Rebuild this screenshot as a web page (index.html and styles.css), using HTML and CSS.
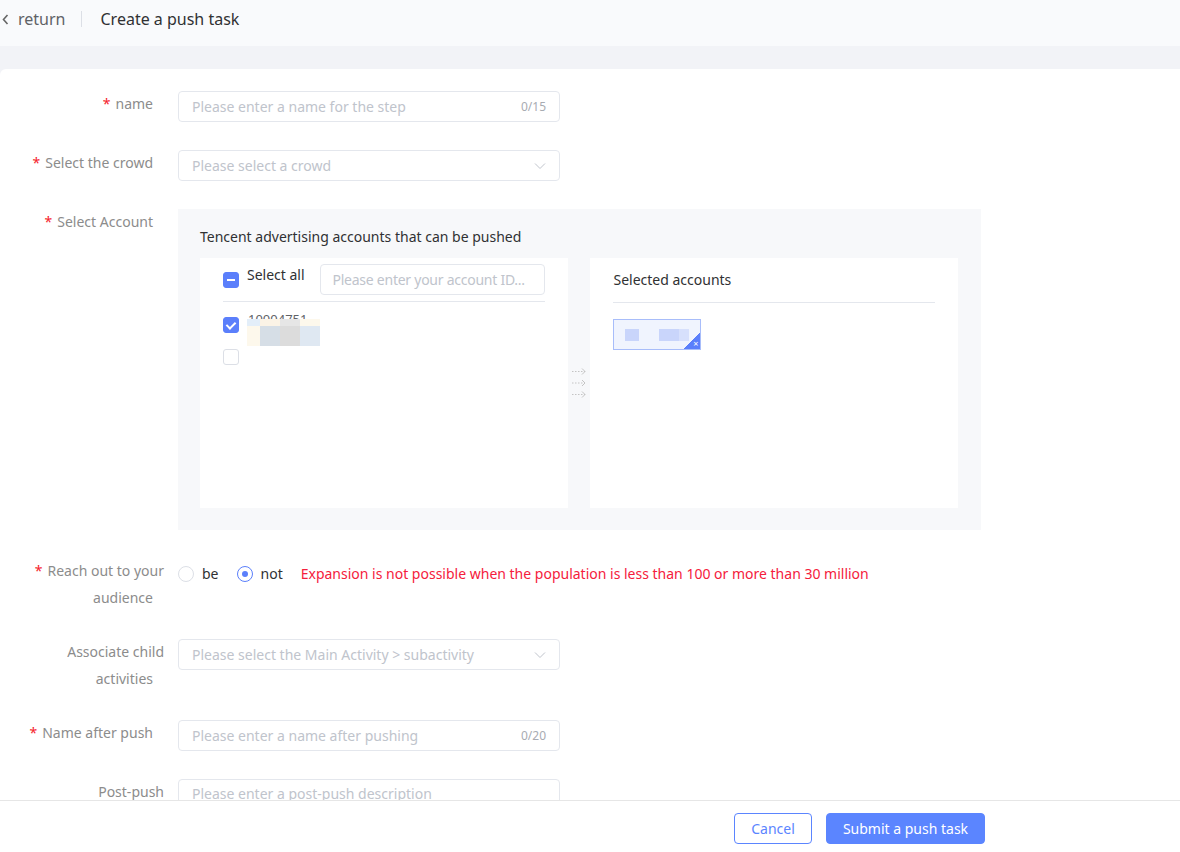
FILE: index.html
```html
<!DOCTYPE html>
<html lang="en">
<head>
    <meta charset="UTF-8">
    <meta name="viewport" content="width=device-width, initial-scale=1.0">
    <title>Create a push task</title>
    <link rel="stylesheet" href="styles.css">
</head>
<body>
    <div class="page">
        <!-- En-tête : retour + titre -->
        <header class="top-bar">
            <a class="back-link" href="#">
                <svg class="back-arrow" width="7" height="11" viewBox="0 0 7 11"><path d="M5.5 1 L1.5 5.5 L5.5 10" fill="none" stroke="#666" stroke-width="1.6"/></svg>
                return
            </a>
            <span class="top-divider"></span>
            <span class="page-title">Create a push task</span>
        </header>

        <main class="content">
            <form class="task-form">
                <div class="form-row">
                    <label class="form-label required">name</label>
                    <div class="form-field">
                        <div class="text-input">
                            <span class="placeholder">Please enter a name for the step</span>
                            <span class="counter">0/15</span>
                        </div>
                    </div>
                </div>

                <div class="form-row">
                    <label class="form-label required">Select the crowd</label>
                    <div class="form-field">
                        <div class="text-input select">
                            <span class="placeholder">Please select a crowd</span>
                            <svg class="caret" width="12" height="8" viewBox="0 0 12 8"><path d="M1 1.5 L6 6.5 L11 1.5" fill="none" stroke="#c0c4cc" stroke-width="1"/></svg>
                        </div>
                    </div>
                </div>

                <div class="form-row">
                    <label class="form-label required">Select Account</label>
                    <div class="form-field">
                        <!-- Boîte de transfert des comptes -->
                        <div class="transfer">
                            <div class="transfer-title">Tencent advertising accounts that can be pushed</div>
                            <div class="transfer-body">
                                <div class="transfer-panel">
                                    <div class="panel-head">
                                        <span class="checkbox indeterminate"></span>
                                        <span class="select-all">Select all</span>
                                        <div class="search-input">
                                            <span class="placeholder">Please enter your account ID...</span>
                                        </div>
                                    </div>
                                    <ul class="account-list">
                                        <li class="account-item">
                                            <span class="checkbox checked"></span>
                                            <span class="account-id">10004751
                                                <span class="mosaic">
                                                    <i style="background:#e3eef9"></i><i style="background:#fbf3e6"></i><i style="background:#e6e6e6"></i><i style="background:#fdf8ec"></i>
                                                    <i style="background:#fdf8ec"></i><i style="background:#d6dee6"></i><i style="background:#dcdcdc"></i><i style="background:#dfe8f2"></i>
                                                </span>
                                            </span>
                                        </li>
                                        <li class="account-item">
                                            <span class="checkbox"></span>
                                        </li>
                                    </ul>
                                </div>

                                <div class="transfer-arrows">
                                    <svg width="16" height="30" viewBox="0 0 16 30">
                                        <g fill="none" stroke="#c4c4c4" stroke-width="1">
                                            <path d="M1 3.5 H14" stroke-dasharray="1.5 1.5"/><path d="M11 0.5 L14 3.5 L11 6.5"/>
                                            <path d="M1 15 H14" stroke-dasharray="1.5 1.5"/><path d="M11 12 L14 15 L11 18"/>
                                            <path d="M1 26.5 H14" stroke-dasharray="1.5 1.5"/><path d="M11 23.5 L14 26.5 L11 29.5"/>
                                        </g>
                                    </svg>
                                </div>

                                <div class="transfer-panel">
                                    <div class="panel-head selected-head">Selected accounts</div>
                                    <div class="tag-list">
                                        <span class="account-tag">
                                            <i class="blur-block small"></i><i class="blur-block wide"></i>
                                            <span class="tag-close">&times;</span>
                                        </span>
                                    </div>
                                </div>
                            </div>
                        </div>
                    </div>
                </div>

                <div class="form-row">
                    <label class="form-label required">Reach out to your audience</label>
                    <div class="form-field radio-line">
                        <label class="radio"><span class="radio-dot"></span>be</label>
                        <label class="radio"><span class="radio-dot on"></span>not</label>
                        <span class="warn">Expansion is not possible when the population is less than 100 or more than 30 million</span>
                    </div>
                </div>

                <div class="form-row">
                    <label class="form-label">Associate child activities</label>
                    <div class="form-field">
                        <div class="text-input select">
                            <span class="placeholder">Please select the Main Activity &gt; subactivity</span>
                            <svg class="caret" width="12" height="8" viewBox="0 0 12 8"><path d="M1 1.5 L6 6.5 L11 1.5" fill="none" stroke="#c0c4cc" stroke-width="1"/></svg>
                        </div>
                    </div>
                </div>

                <div class="form-row">
                    <label class="form-label required">Name after push</label>
                    <div class="form-field">
                        <div class="text-input">
                            <span class="placeholder">Please enter a name after pushing</span>
                            <span class="counter">0/20</span>
                        </div>
                    </div>
                </div>

                <div class="form-row">
                    <label class="form-label">Post-push description</label>
                    <div class="form-field">
                        <div class="text-input textarea">
                            <span class="placeholder">Please enter a post-push description</span>
                        </div>
                    </div>
                </div>
            </form>
        </main>

        <!-- Pied de page : actions -->
        <footer class="actions">
            <button class="btn btn-plain" type="button">Cancel</button>
            <button class="btn btn-primary" type="button">Submit a push task</button>
        </footer>
    </div>
</body>
</html>
```

FILE: styles.css
```css
html, body {
    margin: 0;
    height: 100%;
}
body {
    font-family: "Noto Sans", "Open Sans", sans-serif;
    font-size: 14px;
    color: #333;
    background: #f2f3f7;
}
.page {
    height: 100vh;
    display: flex;
    flex-direction: column;
    overflow: hidden;
}

/* En-tête */
.top-bar {
    height: 46px;
    flex: none;
    display: flex;
    align-items: flex-start;
    background: #f9fafc;
    padding: 8px 0 0 2px;
    box-sizing: border-box;
}
.back-link {
    color: #606266;
    text-decoration: none;
    font-size: 16px;
    line-height: 22px;
    display: flex;
    align-items: center;
    gap: 9px;
}
.back-arrow {
    margin-top: 1px;
}
.top-divider {
    width: 1px;
    height: 16px;
    background: #dcdfe6;
    margin: 3px 18px 0 16px;
}
.page-title {
    font-size: 16px;
    line-height: 22px;
    color: #303133;
}

/* Zone du formulaire */
.content {
    flex: 1;
    overflow: hidden;
    margin-top: 23px;
    background: #fff;
    border-radius: 6px 0 0 0;
}
.task-form {
    padding-top: 22px;
}
.form-row {
    display: flex;
    align-items: flex-start;
    margin-bottom: 28px;
}
.form-label {
    width: 164px;
    flex: none;
    text-align: right;
    color: #8c8c8c;
    line-height: 26.5px;
    margin-right: 14px;
    padding-left: 24px;
    box-sizing: border-box;
}
.form-label.required::before {
    content: "*";
    color: #f5222d;
    margin-right: 5px;
}
/* suffixe invisible du libellé */
.form-label::after {
    content: "";
    display: inline-block;
    width: 11px;
}
.form-field {
    flex: none;
}

/* Champs */
.text-input {
    width: 382px;
    height: 31px;
    box-sizing: border-box;
    border: 1px solid #e4e7ed;
    border-radius: 4px;
    display: flex;
    align-items: center;
    justify-content: space-between;
    padding: 0 13px 0 13px;
    white-space: nowrap;
}
.placeholder {
    color: #c0c4cc;
}
.counter {
    font-size: 12px;
    color: #a8abb2;
}
.textarea {
    height: 60px;
    align-items: flex-start;
    padding-top: 4px;
}

/* Boîte de transfert */
.transfer {
    width: 803px;
    box-sizing: border-box;
    background: #f7f8fa;
    padding: 16px 23px 22px 22px;
}
.transfer-title {
    line-height: 24px;
    color: #303133;
    margin-bottom: 9px;
}
.transfer-body {
    display: flex;
    align-items: stretch;
}
.transfer-panel {
    width: 368px;
    height: 250px;
    background: #fff;
    box-sizing: border-box;
    padding: 0 23px;
}
.transfer-arrows {
    width: 23px;
    display: flex;
    align-items: center;
    justify-content: center;
}
.panel-head {
    height: 43px;
    border-bottom: 1px solid #e4e7ed;
    display: flex;
    align-items: center;
}
.select-all {
    color: #303133;
    margin: -10px 0 0 8px;
}
.search-input {
    margin-left: auto;
    width: 225px;
    height: 31px;
    box-sizing: border-box;
    border: 1px solid #e4e7ed;
    border-radius: 4px;
    display: flex;
    align-items: center;
    padding: 0 10px 0 12px;
    white-space: nowrap;
    overflow: hidden;
}
.search-input .placeholder {
    letter-spacing: -0.25px;
}
.selected-head {
    color: #303133;
    padding-bottom: 1px;
}

/* Cases à cocher */
.checkbox {
    width: 16px;
    height: 16px;
    box-sizing: border-box;
    border: 1px solid #dcdfe6;
    border-radius: 3px;
    display: inline-block;
    position: relative;
    flex: none;
    background: #fff;
}
.checkbox.checked,
.checkbox.indeterminate {
    background: #5b7ffb;
    border-color: #5b7ffb;
}
.checkbox.indeterminate::after {
    content: "";
    position: absolute;
    left: 3px;
    top: 6px;
    width: 8px;
    height: 2px;
    background: #fff;
}
.checkbox.checked::after {
    content: "";
    position: absolute;
    left: 4px;
    top: 2px;
    width: 4px;
    height: 7px;
    border: solid #fff;
    border-width: 0 2px 2px 0;
    transform: rotate(45deg);
}
.account-list {
    list-style: none;
    margin: 0;
    padding: 7px 0 0 0;
}
.account-item {
    height: 32px;
    display: flex;
    align-items: center;
}
.account-id {
    position: relative;
    margin-left: 9px;
    color: #606266;
    font-size: 13px;
    line-height: 1;
    margin-top: -12px;
}
.mosaic {
    position: absolute;
    left: -1px;
    top: 6px;
    width: 73px;
    height: 27px;
    display: grid;
    grid-template-columns: 13px 20px 20px 20px;
    grid-template-rows: 7px 20px;
}
.mosaic i {
    display: block;
}

/* Étiquettes sélectionnées */
.tag-list {
    padding-top: 16px;
}
.account-tag {
    position: relative;
    display: inline-flex;
    align-items: center;
    width: 88px;
    height: 31px;
    box-sizing: border-box;
    border: 1px solid #a8bdfa;
    background: #f0f4fe;
    padding-left: 11px;
    overflow: hidden;
}
.blur-block {
    display: block;
    height: 12px;
    background: #c9d5fb;
}
.blur-block.small {
    width: 14px;
    margin-right: 20px;
}
.blur-block.wide {
    width: 30px;
    background: linear-gradient(to right, #c9d5fb 20px, #d7e0fc 20px);
}
.tag-close {
    position: absolute;
    right: 0;
    bottom: 0;
    width: 16px;
    height: 16px;
    background: linear-gradient(135deg, transparent 50%, #5b7ffb 50%);
    color: #fff;
    font-size: 9px;
    line-height: 1;
    text-align: right;
    padding: 6px 2px 0 0;
    box-sizing: border-box;
}

/* Boutons radio */
.radio-line {
    display: flex;
    align-items: center;
    height: 31px;
}
.radio {
    display: inline-flex;
    align-items: center;
    color: #303133;
    margin-right: 18px;
}
.radio-dot {
    width: 16px;
    height: 16px;
    box-sizing: border-box;
    border: 1px solid #dcdfe6;
    border-radius: 50%;
    margin-right: 8px;
    position: relative;
}
.radio-dot.on {
    border-color: #5b7ffb;
}
.radio-dot.on::after {
    content: "";
    position: absolute;
    left: 4px;
    top: 4px;
    width: 6px;
    height: 6px;
    border-radius: 50%;
    background: #5b7ffb;
}
.warn {
    color: #f5203c;
    white-space: nowrap;
}

/* Pied de page */
.actions {
    flex: none;
    height: 52px;
    box-sizing: border-box;
    background: #fff;
    border-top: 1px solid #e6e6e6;
    display: flex;
    align-items: flex-start;
    justify-content: flex-end;
    padding: 12px 195px 0 0;
    gap: 14px;
}
.btn {
    height: 31px;
    border-radius: 4px;
    font-family: inherit;
    font-size: 14px;
    padding: 0;
    white-space: nowrap;
    cursor: pointer;
}
.btn-plain {
    background: #fff;
    border: 1px solid #5b85ff;
    color: #5b85ff;
    width: 78px;
}
.btn-primary {
    background: #5b85ff;
    border: 1px solid #5b85ff;
    color: #fff;
    width: 159px;
}
```
